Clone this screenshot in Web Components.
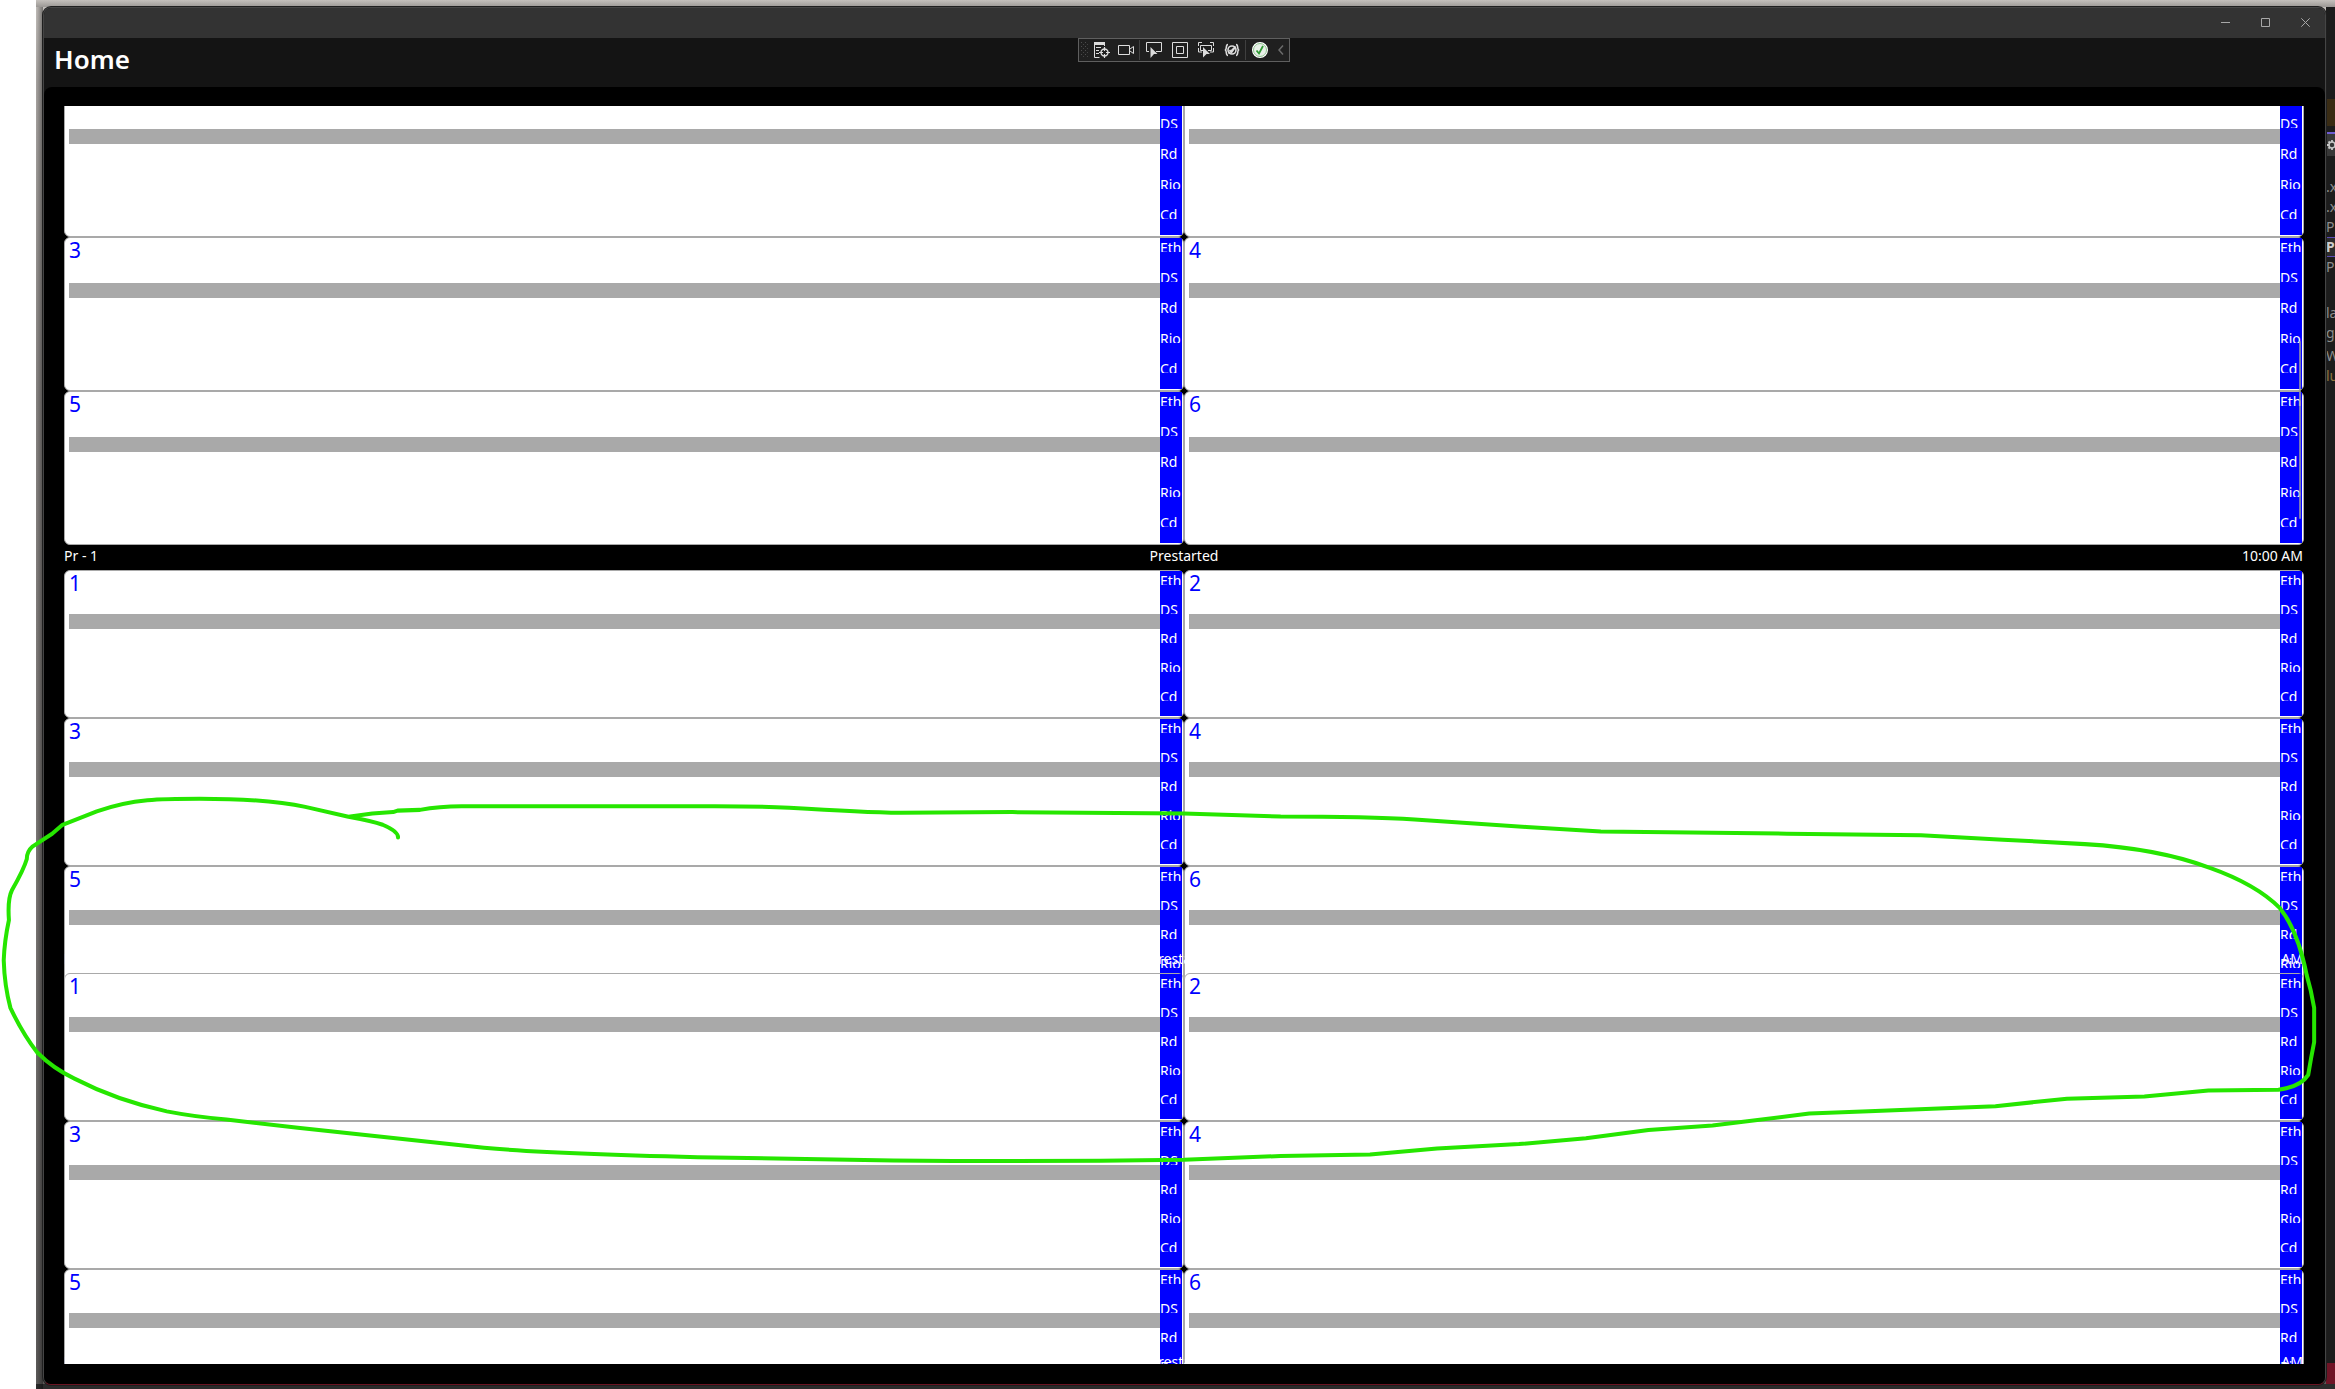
<!DOCTYPE html>
<html lang="en">
<head>
<meta charset="utf-8">
<title>Home</title>
<style>
html,body{margin:0;height:100%;overflow:hidden;background:#fff}
body{font-family:"Noto Sans","Open Sans",sans-serif;font-size:14px;line-height:21px;color:#fff}
</style>
</head>
<body>
<desk-top>
  <app-window>
    <title-bar slot="title"></title-bar>
    <page-header slot="header">Home<debug-toolbar slot="tools"></debug-toolbar></page-header>
    <group-scroller>
      <cell-group class="tall"></cell-group>
      <cell-group header></cell-group>
      <cell-group header></cell-group>
      <group-header></group-header>
    </group-scroller>
  </app-window>
  <side-editor slot="side"></side-editor>
  <ink-stroke slot="ink"></ink-stroke>
</desk-top>
<script>
const define = (name, html, setup) => {
  const t = document.createElement('template');
  t.innerHTML = html;
  customElements.define(name, class extends HTMLElement {
    constructor() {
      super();
      this.attachShadow({ mode: 'open' }).append(t.content.cloneNode(true));
    }
    connectedCallback() { if (setup) setup(this, this.shadowRoot); }
  });
};

define('desk-top', `
<style>
:host{display:flex;position:relative;height:100vh;box-sizing:border-box;padding-left:36px;overflow:hidden}
.back{flex:1;display:flex;box-sizing:border-box;min-width:0;padding:7px 0 4px 7px;
 background:
  linear-gradient(90deg,#0000 0,#0006 7px,#0000 7px) 0 7px no-repeat,
  linear-gradient(#0000 0,#0003 7px,#0000 7px),
  linear-gradient(#2b2b2b,#2b2b2b) 0 100%/100% 5px no-repeat,
  linear-gradient(#c4c0bc 0,#aaa6a3 80px,#8a8684 400px,#7a7674 900px,#5c5a59 1389px)}
slot:not([name]){display:flex;flex:1;min-width:0}
</style>
<div class="back"><slot></slot><slot name="side"></slot></div>
<slot name="ink"></slot>`);

define('app-window', `
<style>
:host{flex:1;min-width:0;display:flex;flex-direction:column;position:relative;z-index:1;border:1px solid #454545;border-bottom-color:#6b1422;
 border-radius:8px;background:#141414;box-shadow:0 0 0 1px #1f1f1f;overflow:hidden}
main{flex:1;min-height:0;display:flex;background:#000;border-radius:8px 8px 0 0;padding:19px 21px 20px 20px}
</style>
<slot name="title"></slot><slot name="header"></slot>
<main><slot></slot></main>`);

define('title-bar', `
<style>
:host{display:flex;justify-content:flex-end;height:30px;background:#333}
button{all:unset;width:40px;height:28px;display:grid;place-items:center}
svg{display:block;fill:none;stroke:#a8a8a8;stroke-width:1}
</style>
<button aria-label="Minimize"><svg width="9" height="9"><path d="M0 4.5h9"/></svg></button>
<button aria-label="Maximize"><svg width="9" height="9"><path d="M.5 .5h8v8h-8z"/></svg></button>
<button aria-label="Close"><svg width="9" height="9"><path d="M.3 .3l8.400 8.400M8.700 .3L.3 8.700"/></svg></button>`);

define('page-header', `
<style>
:host{display:grid;grid-template-columns:1fr auto 1fr;height:49px;padding-right:1px;background:#141414}
h1{margin:0;padding:0 10px;font-size:26px;line-height:43px;font-weight:600}
</style>
<h1><slot></slot></h1><slot name="tools"></slot>`);

define('debug-toolbar', `
<style>
:host{display:flex;align-items:center;align-self:start;box-sizing:border-box;height:24px;border:1px solid #5f5f5f;background:#1f1f1f}
.grip{width:11px;height:16px;display:block}
.set{display:flex}
.wide{gap:2px}
i{width:1px;height:20px;margin:0 2px 0 1px;background:#3f3f3f}
button{all:unset;width:24px;height:22px;display:grid;place-items:center}
.more{width:17px}
svg{display:block;fill:none;stroke:#dcdcdc;stroke-width:1}
</style>
<svg class="grip" viewBox="0 0 11 16" style="stroke:#4d4d4d;stroke-dasharray:1 3"><path d="M2.500 0v16M6.500 0v16"/><path d="M4.500 2v14M8.500 2v14" opacity=".8"/></svg>
<div class="set">
<button aria-label="Go to Live Visual Tree"><svg width="16" height="16"><path d="M.5 2v13.500h5M10.500 2v2"/><path d="M0 1.500h11" stroke-width="3"/><path d="M2 5.500h5M2 8.500h3M2 11.500h3"/><circle cx="10.500" cy="10.500" r="3.500" stroke-width="1.400"/><path d="M10.500 5v4M10.500 12v4M5 10.500h4M12 10.500h4" stroke-width="1.200"/></svg></button>
<button aria-label="Record"><svg width="16" height="16"><path d="M.5 3.500h11v9H.5zM12 7l3.500-2.500v7L12 9"/></svg></button>
</div><i></i>
<div class="set wide">
<button aria-label="Select Element"><svg width="16" height="16"><path d="M3 9.500H.5v-9h15v9H10"/><path d="M4.500 5l7 7H8l-3.500 4z" fill="#dcdcdc" stroke="none"/></svg></button>
<button aria-label="Display Layout Adorners"><svg width="16" height="16"><path d="M.5 .5h15v15H.5z"/><path d="M4.500 4.500h7v7h-7z"/></svg></button>
<button aria-label="Track Focused Element"><svg width="16" height="16"><path d="M.5 4V.5H4M12 .5h3.500V4M15.500 6v4H12M.5 6v4H4"/><path d="M5 8.500H2.500v-5h11v5H10"/><path d="M5 5l7 7H8.500L5 15.500z" fill="#dcdcdc" stroke="none"/></svg></button>
<button aria-label="Show Runtime Tools"><svg width="16" height="16" style="stroke-width:1.600"><path d="M4 2.500C1.500 2.500 3 6.500 1.500 8 3 9.500 1.500 13.500 4 13.500M12 2.500c2.500 0 1 4 2.500 5.500-1.500 1.500 0 5.500-2.500 5.500"/><circle cx="8" cy="8" r="4"/><path d="M5.500 8l2 2.500L11 5.500M4.500 11.500l7-7"/></svg></button>
</div><i></i>
<button aria-label="Hot Reload"><svg width="16" height="16"><circle cx="8" cy="8" r="7.300" fill="#e8f0e8" stroke="#fff" stroke-width="1.400"/><circle cx="8" cy="8" r="6.500" stroke="#8fc38f"/><path d="M4.500 8.500l2.500 3L11 4" stroke="#2f9a34" stroke-width="1.800"/></svg></button>
<button class="more" aria-label="Collapse"><svg width="6" height="10" style="stroke:#6a6a6a;stroke-width:1.500"><path d="M5 .5L1 5l4 4.500"/></svg></button>`);

define('group-scroller', `
<style>
:host{flex:1;min-width:0;position:relative;overflow:hidden}
.view{height:100%;overflow-y:scroll;scrollbar-width:none}
.thumb{position:absolute;right:3px;top:235px;width:2px;height:178px;border-radius:1px;background:#a0a0a0c0}
</style>
<div class="view"><slot></slot></div><div class="thumb"></div>`,
(el, root) => requestAnimationFrame(() => { root.querySelector('.view').scrollTop = 23; }));

define('group-header', `
<style>
:host{display:grid;grid-template-columns:1fr auto 1fr;height:25px;position:relative;z-index:1;color:#fff}
span:last-child{text-align:right;padding-right:1px}
span:first-child{padding-left:1px}
</style>
<span>Pr - 1</span><span>Prestarted</span><span>10:00 AM</span>`);

/* Groups with a header keep a fixed height, so their last row runs on beneath the next group. */
define('cell-group', `
<style>
:host{display:block;--row:148px;position:relative}
:host(.tall){--row:154px}
.cells{display:grid;grid-template-columns:1fr 1fr;grid-auto-rows:var(--row)}
:host([header]) .cells{height:378px}
</style>
<div class="lead"></div><div class="cells"></div>`,
(el, root) => {
  const cells = root.querySelector('.cells');
  if (cells.childElementCount) return;
  if (el.hasAttribute('header')) root.querySelector('.lead').append(document.createElement('group-header'));
  for (let n = 1; n <= 6; n++) {
    const c = document.createElement('unit-cell');
    c.textContent = n;
    cells.append(c);
  }
});

define('unit-cell', `
<style>
:host{display:grid;grid-template-columns:1fr 22px;min-width:0;box-sizing:border-box;border:1px solid #a9a9a9;border-radius:6px;background:#fff;padding:0 1px 1px 4px}
.body{display:grid;grid-template-rows:1fr 15px 2fr;min-height:0}
.no{font-size:21px;line-height:25px;color:#00f;min-height:0}
.bar{background:#a9a9a9}
ul{margin:0;padding:0;list-style:none;display:flex;flex-direction:column;background:#00f;min-height:0}
li{flex:14 1 0;min-height:0;overflow:hidden;line-height:19px;white-space:nowrap}
li:empty{flex-grow:16}
</style>
<div class="body"><div class="no"><slot></slot></div><div class="bar"></div></div>
<ul><li>Eth</li><li></li><li>DS</li><li></li><li>Rd</li><li></li><li>Rio</li><li></li><li>Cd</li><li></li></ul>`);

define('side-editor', `
<style>
:host{display:flex;flex-direction:column;width:9px;margin-bottom:1px;overflow:hidden;background:#1c1c1c;color:#8c8c8c}
div{white-space:nowrap;line-height:20px;height:20px}
.top{height:92px}
.note{height:27px;background:#3a2c14}
.line{height:8px;box-sizing:border-box;border-bottom:2px solid #6d5bd0}
.tab{height:22px;background:#383838;margin-bottom:21px}
.sel{box-sizing:border-box;line-height:18px;border:solid #5b4bb5;border-width:1px 0;font-weight:700;color:#ccc;background:#2c2c2c}
.skip{height:26px}
.s5{height:3px}
.rest{flex:1}
.foot{height:21px;background:#701426}
svg{display:block}
</style>
<div class="top"></div><div class="note"></div><div class="line"></div>
<div class="tab"><svg width="9" height="22"><circle cx="6" cy="11" r="3" fill="none" stroke="#c8c8c8" stroke-width="1.500"/><path d="M6 6v2M6 14v2M1 11h2M2.500 7.500l1.500 1.500M2.500 14.500L4 13" stroke="#c8c8c8" stroke-width="1.800"/></svg></div>
<div>.x</div><div>.x</div><div>P</div><div class="sel">P</div><div>P</div>
<div class="skip"></div><div>la</div><div>g</div><div class="s5"></div><div>W</div><div style="color:#8f7440">lu</div>
<div class="rest"></div><div class="foot"></div>`);

define('ink-stroke', `
<style>
:host{position:absolute;inset:0;z-index:2;pointer-events:none}
svg{display:block;width:100%;height:100%;fill:none;stroke:#26e600;stroke-width:2.700;stroke-linecap:round;stroke-linejoin:round}
</style>
<svg viewBox="0 0 1568 933" preserveAspectRatio="none"><path d="M267.300 562.500Q267.500 558.500 257 554Q250 551.500 234 548.600L205 542Q180 536.500 134 536.500Q110 536.500 99 537.500Q82 539 65 545L42 554L35 560L22 568.500Q18 572 18 577Q16 584 8 598Q5 604 6 618Q3 632 2.500 645Q3 662 7 677Q15 694 25 707Q36 718 50 724.500Q78 739 112 746.500Q130 750 152 752L200 757.500L325 771Q370 775 480 777.500L600 779.500Q700 780.500 795 779L860 776.500L920 775.500L965 771.500L1020 768.500L1065 764.500L1107 759L1150 756L1215 748L1255 746.500L1340 743L1388 738L1440 736.500L1483 732.500L1530 732Q1545 730 1550 722Q1552 710 1554 700V677Q1552 665 1549 655Q1543 625 1531 610Q1515 594 1484 583Q1450 570 1400 567L1345 564L1290 561L1200 560L1075 558.500L1025 555.500L950 550.500Q920 548.500 860 548.500L795 546.500L680 545.500L605 546Q580 545.500 530 542.500Q510 541.500 480 541.500H310Q295 541.500 282 544L267 544.500L264 545.500L250 546.500L234 548.600"/></svg>`);
</script>
</body>
</html>
